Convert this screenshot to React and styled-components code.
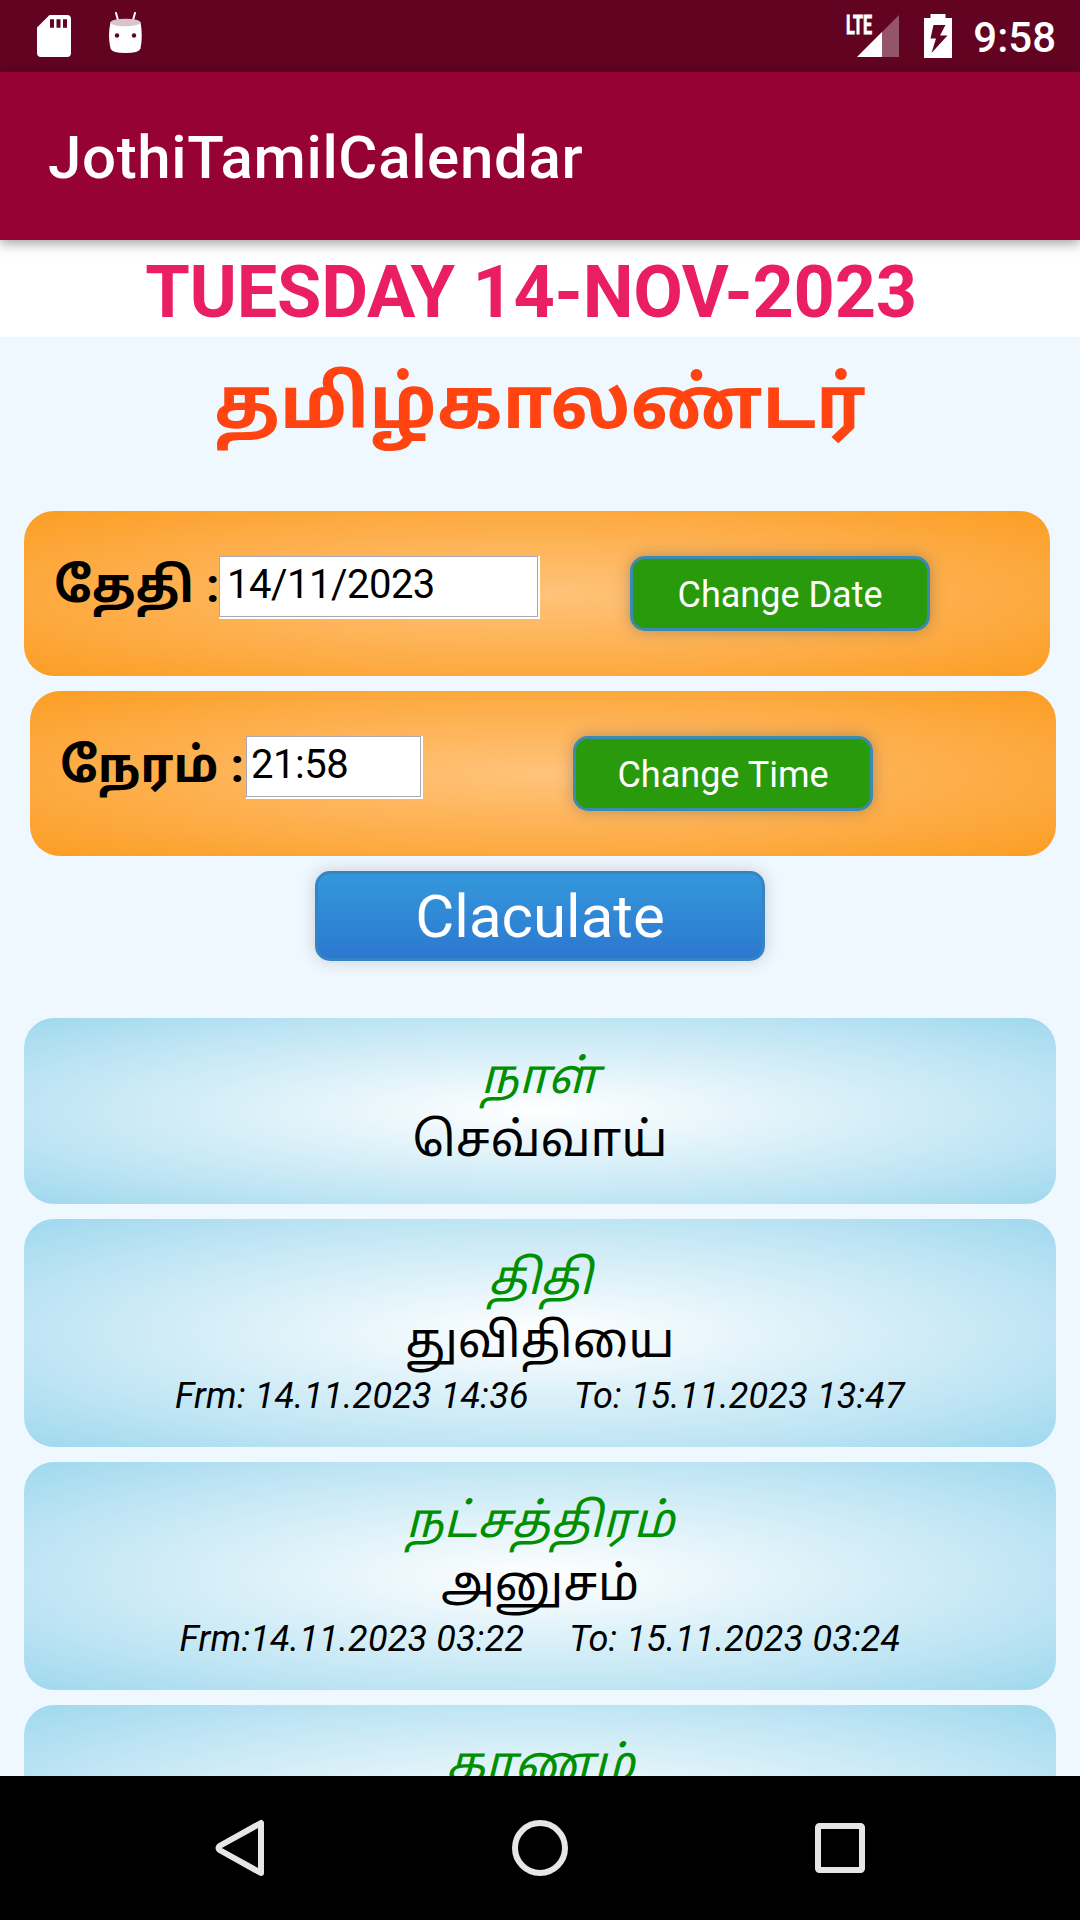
import React from 'react';
import styled, { createGlobalStyle } from 'styled-components';

const details = [
  { title: 'நாள்', value: 'செவ்வாய்' },
  { title: 'திதி', value: 'துவிதியை', from: 'Frm: 14.11.2023 14:36', to: 'To: 15.11.2023 13:47' },
  { title: 'நட்சத்திரம்', value: 'அனுசம்', from: 'Frm:14.11.2023 03:22', to: 'To: 15.11.2023 03:24' },
  { title: 'கரணம்' },
];

const App = () => {
  return (
    <Phone>
      <GlobalStyle />
      <StatusBar>
        <svg width="34" height="42" viewBox="0 0 34 42">
          <path fill="#fff" fillRule="evenodd" d="M12.500 0H30a4 4 0 0 1 4 4v34a4 4 0 0 1-4 4H4a4 4 0 0 1-4-4V12.500ZM13 4.300v8.500h4V4.300ZM19.500 4.300v8.500h4V4.300ZM26 4.300v8.500h4V4.300Z" />
        </svg>
        <MugIcon width="36" height="42" viewBox="0 0 36 42">
          <path d="M8 1l2.500 9M27 1l-2.500 9" stroke="#fff" strokeWidth="2" strokeLinecap="round" />
          <path fill="#fff" d="M2.500 10h30Q35 24 32.500 36.500Q31 41 17.500 41Q4 41 2.500 36.500Q-.5 24 2.500 10Z" />
          <ellipse cx="17.500" cy="10.500" rx="15" ry="3.800" fill="#d9c4cd" />
          <circle cx="9" cy="23.500" r="2.200" fill="#620322" />
          <circle cx="26" cy="23.500" r="2.200" fill="#620322" />
        </MugIcon>
        <StatusRight>
          <SignalIcon width="53" height="44" viewBox="0 0 53 44">
            <text x="0" y="18.500" fill="#fff" stroke="#fff" strokeWidth=".8" fontFamily="Roboto" fontWeight="700" fontSize="25.500" textLength="26" lengthAdjust="spacingAndGlyphs">LTE</text>
            <path d="M53 0v42H11Z" fill="#fff" fillOpacity=".32" />
            <path d="M36 17v25H11Z" fill="#fff" />
          </SignalIcon>
          <BatteryIcon width="28" height="44" viewBox="0 0 28 44">
            <path fill="#fff" fillRule="evenodd" d="M6.500 -1h15v4H28v40H0V3h6.500ZM9.500 10L6.500 23.500H12L7.500 38L23.500 20.500H16L21.500 10Z" />
          </BatteryIcon>
          <Clock>9:58</Clock>
        </StatusRight>
      </StatusBar>
      <AppBar>JothiTamilCalendar</AppBar>
      <DateHeading>TUESDAY 14-NOV-2023</DateHeading>
      <Content>
        <Title>தமிழ்காலண்டர்</Title>
        <FieldRow>
          <Label $width="165px">தேதி :</Label>
          <Field $width="319px" $inset="7px" defaultValue="14/11/2023" />
          <ChangeButton $gap="90px">Change Date</ChangeButton>
        </FieldRow>
        <FieldRow $shift="6px">
          <Label $width="186px">நேரம் :</Label>
          <Field $width="175px" $inset="4px" defaultValue="21:58" />
          <ChangeButton $gap="150px">Change Time</ChangeButton>
        </FieldRow>
        <CalculateButton>Claculate</CalculateButton>
        {details.map((item) => (
          <Card key={item.title}>
            <CardTitle>{item.title}</CardTitle>
            <CardValue>{item.value}</CardValue>
            {item.from && (
              <Period>
                <span>{item.from}</span>
                <span>{item.to}</span>
              </Period>
            )}
          </Card>
        ))}
      </Content>
      <NavBar>
        <svg width="50" height="60" viewBox="0 0 50 60">
          <path d="M46 5v50L4.500 32q-2-2 0-4Z" fill="none" stroke="#e6e6e6" strokeWidth="6" strokeLinejoin="round" />
        </svg>
        <svg width="60" height="60" viewBox="0 0 60 60">
          <circle cx="30" cy="30" r="25" fill="none" stroke="#e6e6e6" strokeWidth="6" />
        </svg>
        <svg width="50" height="60" viewBox="0 0 50 60">
          <rect x="3" y="8" width="44" height="44" rx="1.500" fill="none" stroke="#e6e6e6" strokeWidth="6" />
        </svg>
      </NavBar>
    </Phone>
  );
};

const GlobalStyle = createGlobalStyle`
  body {
    margin: 0;
  }

  * {
    box-sizing: border-box;
  }
`;

const Phone = styled.div`
  display: flex;
  flex-direction: column;
  width: 1080px;
  height: 1920px;
  overflow: hidden;
  font-family: Roboto, 'Noto Sans Tamil', 'Noto Sans', sans-serif;
  color: #000;
`;

const StatusBar = styled.div`
  display: flex;
  align-items: flex-start;
  flex: none;
  height: 72px;
  padding: 15px 24px 0 37px;
  background: #620322;
  color: #fff;
`;

const MugIcon = styled.svg`
  margin: -3px 0 0 37px;
  fill: none;
`;

const StatusRight = styled.div`
  display: flex;
  margin-left: auto;
`;

const SignalIcon = styled.svg`
  margin-right: 25px;
  overflow: visible;
`;

const BatteryIcon = styled.svg`
  overflow: visible;
`;

const Clock = styled.div`
  margin-left: 21px;
  font-size: 42px;
  font-weight: 500;
  line-height: 45px;
`;

const AppBar = styled.div`
  flex: none;
  height: 168px;
  padding-left: 48px;
  background: #960233;
  color: #fff;
  font-size: 60px;
  font-weight: 500;
  letter-spacing: 0.65px;
  line-height: 172px;
  box-shadow: 0 3px 12px rgba(0, 0, 0, 0.4);
  z-index: 1;
`;

const DateHeading = styled.div`
  flex: none;
  height: 97px;
  padding-right: 18px;
  background: #fff;
  color: #e91e63;
  font-size: 72px;
  font-weight: 700;
  letter-spacing: -0.25px;
  line-height: 106px;
  text-align: center;
`;

const Content = styled.div`
  display: flex;
  flex-direction: column;
  flex: 1;
  min-height: 0;
  overflow: hidden;
  padding: 0 24px;
  background: #f0f8ff;
`;

const Title = styled.div`
  flex: none;
  height: 174px;
  color: #ff4311;
  font-size: 72px;
  font-weight: 700;
  line-height: 133px;
  text-align: center;
`;

const FieldRow = styled.div`
  display: flex;
  align-items: flex-start;
  flex: none;
  width: 1026px;
  height: 165px;
  margin: 0 0 15px ${({ $shift }) => $shift || '0'};
  padding: 45px 30px;
  border-radius: 30px;
  background: radial-gradient(#ffc37a, #fda93f 70%, #fb9d22);
`;

const Label = styled.label`
  width: ${({ $width }) => $width};
  font-size: 48px;
  font-weight: 700;
  line-height: 60px;
  white-space: pre;
`;

const Field = styled.input`
  width: ${({ $width }) => $width};
  height: 61px;
  margin-right: 2px;
  padding: 0 ${({ $inset }) => $inset} 5px;
  border: 1px solid #a9a9b4;
  border-radius: 0;
  background: #fff;
  box-shadow: 2px 0 #fff, 0 2px #fff, 2px 2px #fff;
  font-family: Roboto, sans-serif;
  font-size: 40px;
  letter-spacing: -0.5px;
`;

const ChangeButton = styled.button`
  width: 300px;
  height: 75px;
  margin-left: ${({ $gap }) => $gap};
  padding: 2px 0 0;
  border: 3px solid #3b8bb0;
  border-radius: 15px;
  background: #289a0b;
  box-shadow: 0 0 15px rgba(80, 80, 80, 0.4);
  color: #fff;
  font-family: Roboto, sans-serif;
  font-size: 36px;
`;

const CalculateButton = styled.button`
  align-self: center;
  flex: none;
  width: 450px;
  height: 90px;
  margin-bottom: 57px;
  padding: 0;
  border: 3px solid #3585c5;
  border-radius: 15px;
  background: linear-gradient(#3498db, #2c78d0);
  box-shadow: 0 0 15px rgba(100, 100, 100, 0.3);
  color: #fff;
  font-family: Roboto, sans-serif;
  font-size: 60px;
`;

const Card = styled.div`
  flex: none;
  margin-bottom: 15px;
  padding: 30px;
  border-radius: 30px;
  background: radial-gradient(#fff, #bfe5f4 70%, #9fd8ee);
  text-align: center;

  &:last-child {
    height: 228px;
  }
`;

const CardTitle = styled.div`
  height: 63px;
  color: #008f00;
  font-size: 48px;
  font-style: italic;
  line-height: 58px;
`;

const CardValue = styled.div`
  height: 63px;
  font-size: 48px;
  line-height: 58px;
`;

const Period = styled.div`
  display: flex;
  justify-content: center;
  gap: 45px;
  height: 42px;
  font-size: 36px;
  font-style: italic;
  letter-spacing: 0.17px;
  line-height: 42px;
`;

const NavBar = styled.div`
  display: flex;
  align-items: center;
  justify-content: space-between;
  flex: none;
  height: 144px;
  padding: 0 215px;
  background: #000;
`;

export default App;
